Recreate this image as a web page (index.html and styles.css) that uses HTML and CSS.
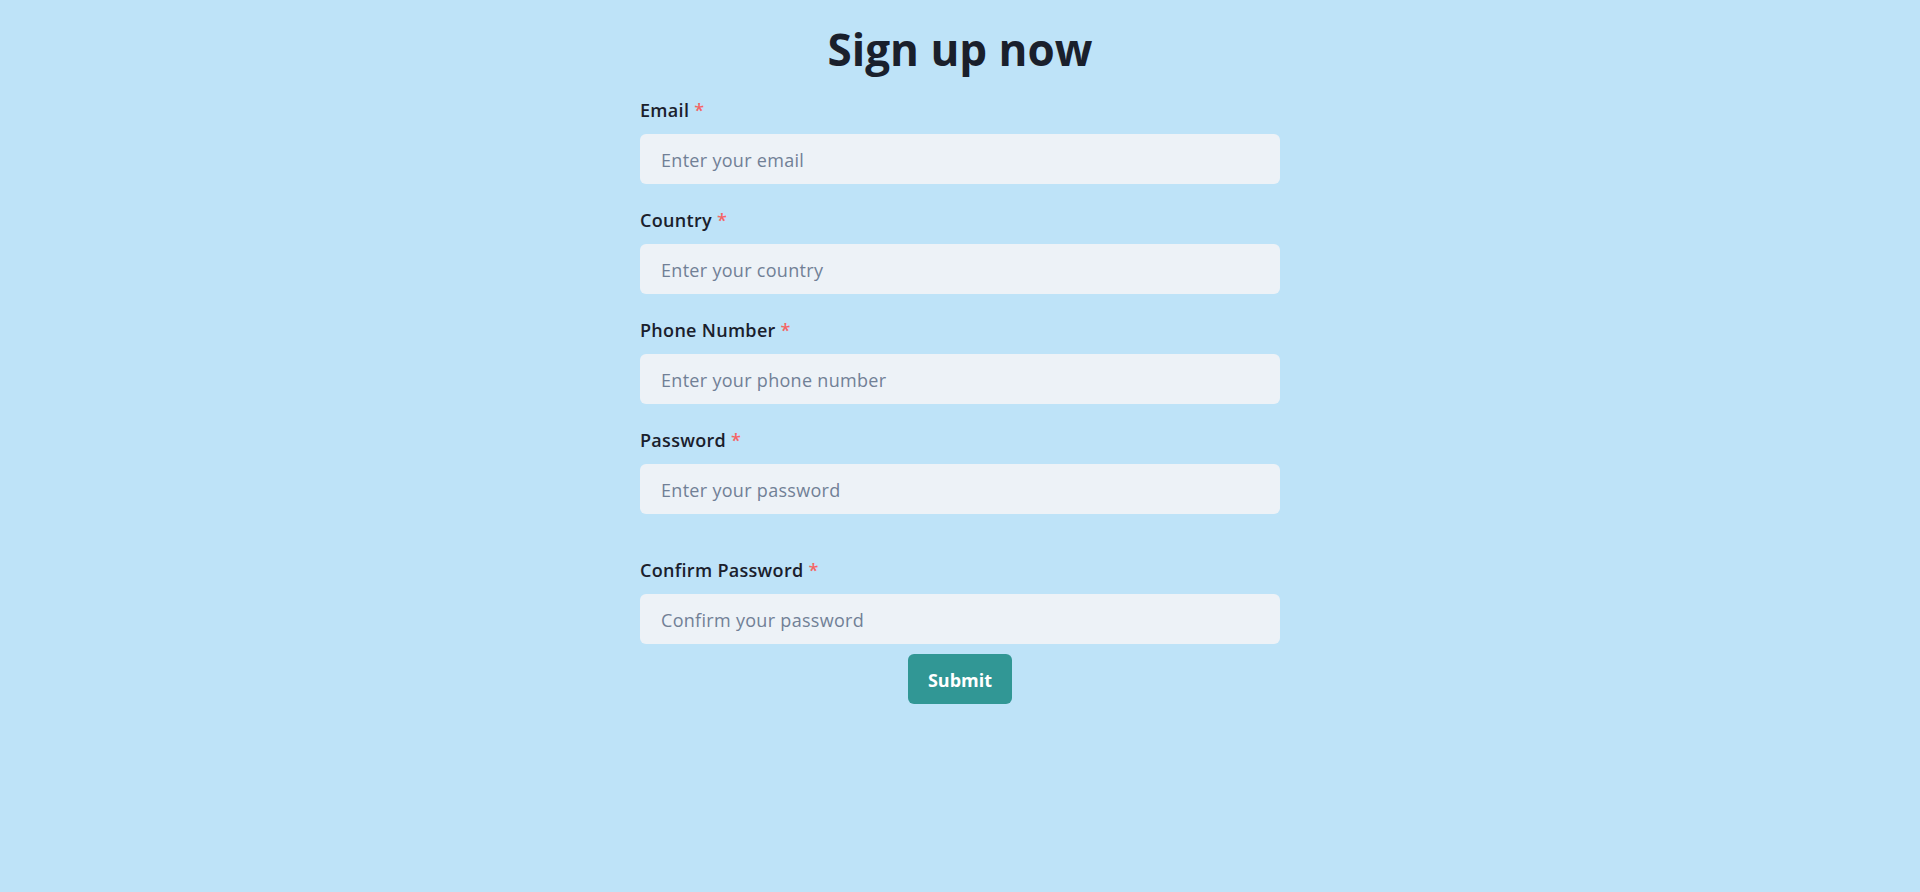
FILE: index.html
```html
<!DOCTYPE html>
<html lang="en">
<head>
<meta charset="utf-8">
<title>Sign up now</title>
<link rel="stylesheet" href="styles.css">
</head>
<body>
<main class="page">
  <h1 class="title">Sign up now</h1>
  <form class="form">
    <div class="field">
      <label class="label" for="email">Email <span class="req">*</span></label>
      <input class="input" id="email" type="email" placeholder="Enter your email">
    </div>
    <div class="field">
      <label class="label" for="country">Country <span class="req">*</span></label>
      <input class="input" id="country" type="text" placeholder="Enter your country">
    </div>
    <div class="field">
      <label class="label" for="phone">Phone Number <span class="req">*</span></label>
      <input class="input" id="phone" type="tel" placeholder="Enter your phone number">
    </div>
    <div class="field field-wide">
      <label class="label" for="password">Password <span class="req">*</span></label>
      <input class="input" id="password" type="password" placeholder="Enter your password">
    </div>
    <div class="field field-last">
      <label class="label" for="confirm">Confirm Password <span class="req">*</span></label>
      <input class="input" id="confirm" type="password" placeholder="Confirm your password">
    </div>
    <button class="submit" type="button">Submit</button>
  </form>
</main>
</body>
</html>
```
FILE: styles.css
```css
* {
  box-sizing: border-box;
}

html, body {
  margin: 0;
  padding: 0;
}

body {
  background: #bee3f8;
  min-height: 892px;
  font-family: "Open Sans", "Noto Sans", sans-serif;
  color: #1a202c;
}

.page {
  width: 640px;
  margin: 0 auto;
  padding-top: 25px;
}

.title {
  margin: 0 0 23px;
  font-size: 44px;
  line-height: 48px;
  font-weight: 700;
  text-align: center;
  color: #1a202c;
}

.form {
  display: flex;
  flex-direction: column;
}

.field {
  display: flex;
  flex-direction: column;
  gap: 10px;
  margin-bottom: 22px;
}

.field-wide {
  margin-bottom: 42px;
}

.field-last {
  margin-bottom: 10px;
}

.label {
  font-size: 18px;
  line-height: 28px;
  font-weight: 600;
  letter-spacing: 0.3px;
  color: #1a202c;
}

.req {
  color: #f56565;
}

.input {
  display: block;
  width: 100%;
  height: 50px;
  padding: 2px 21px 0;
  border: none;
  border-radius: 6px;
  background: #edf2f7;
  font-family: "Open Sans", "Noto Sans", sans-serif;
  font-size: 18px;
  letter-spacing: 0.3px;
  color: #1a202c;
  outline: none;
}

.input::placeholder {
  color: #718096;
  opacity: 1;
}

.submit {
  align-self: center;
  height: 50px;
  padding: 1px 20px 0;
  border: none;
  border-radius: 6px;
  background: #319795;
  color: #ffffff;
  font-family: "Open Sans", "Noto Sans", sans-serif;
  font-size: 18px;
  font-weight: 700;
  line-height: 28px;
  cursor: pointer;
}
```
